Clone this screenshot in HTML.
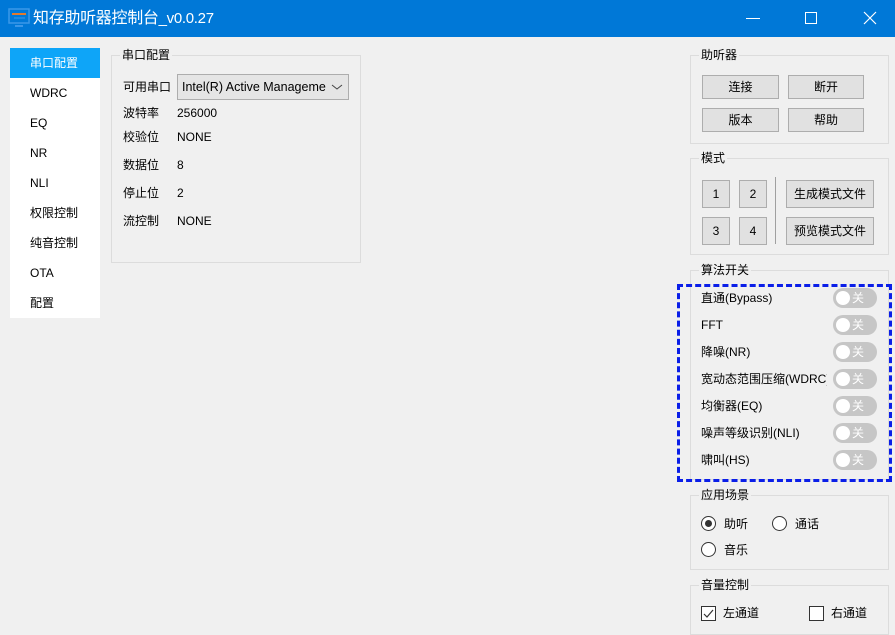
<!DOCTYPE html>
<html><head><meta charset="utf-8"><style>
*{box-sizing:border-box;margin:0;padding:0}
body{width:895px;height:627px;overflow:hidden;background:#f0f0f0;font-family:"Liberation Sans","Noto Sans CJK SC",sans-serif;font-size:12px;line-height:16px;color:#000;position:relative}
.a{position:absolute;line-height:16px}
.title{left:0;top:0;width:895px;height:37px;background:#0078d7;color:#fff}
.grp{position:absolute;border:1px solid #dcdcdc}
.grp>.t{position:absolute;top:-9px;left:8px;background:#f0f0f0;padding:0 2px;font-size:12px;line-height:16px}
.btn{position:absolute;background:#e1e1e1;border:1px solid #adadad;text-align:center;font-size:12px}
.nav div{height:30px;line-height:30px;padding-left:20px}
.tg{position:absolute;left:833px;width:44px;height:20px;border-radius:10px;background:#c6c6c6}
.tg::before{content:"";position:absolute;left:3px;top:3px;width:14px;height:14px;border-radius:7px;background:#fff}
.tg span{position:absolute;left:19px;top:2px;color:#fff;font-size:12px;line-height:16px}
.lbl{position:absolute;left:701px;line-height:16px}
.rad{position:absolute;width:15px;height:15px;border:1px solid #333;border-radius:50%;background:#fff}
</style></head><body>
<div class="a title">
 <svg class="a" style="left:8px;top:8px" width="22" height="20"><rect x="1" y="1" width="20" height="14" fill="none" stroke="#3b97e8" stroke-width="1.5"/><rect x="4" y="5" width="14" height="2" fill="#e07a2e"/><line x1="6" y1="10" x2="17" y2="10" stroke="#3b97e8"/><rect x="7" y="17" width="8" height="2" fill="#3b97e8"/></svg>
 <div class="a" style="left:33px;top:8px;font-size:16px;line-height:22px;letter-spacing:-0.3px">知存助听器控制台<span style="font-size:15px">_v0.0.27</span></div>
 <div class="a" style="left:746px;top:18px;width:14px;height:1px;background:#fff"></div>
 <div class="a" style="left:805px;top:12px;width:12px;height:12px;border:1px solid #fff"></div>
 <svg class="a" style="left:863px;top:11px" width="14" height="14"><path d="M1 1L13 13M13 1L1 13" stroke="#fff" stroke-width="1.2"/></svg>
</div>
<div class="a nav" style="left:10px;top:48px;width:90px;height:270px;background:#fff">
 <div style="background:#0ea5f8;color:#fff">串口配置</div><div>WDRC</div><div>EQ</div><div>NR</div><div>NLI</div><div>权限控制</div><div>纯音控制</div><div>OTA</div><div>配置</div>
</div>
<div class="grp" style="left:111px;top:55px;width:250px;height:208px"><div class="t">串口配置</div></div>
<div class="a" style="left:123px;top:79px">可用串口</div>
<div class="a" style="left:177px;top:74px;width:172px;height:26px;background:#e5e5e5;border:1px solid #adadad;line-height:24px;padding-left:4px;overflow:hidden;white-space:nowrap;font-size:12.5px">Intel(R) Active Manageme<span class="a" style="right:0;top:0;width:22px;height:24px;background:#e5e5e5"><svg width="22" height="24"><path d="M6 10L11 14L16 10" stroke="#444" fill="none"/></svg></span></div>
<div class="a" style="left:123px;top:105px">波特率</div><div class="a" style="left:177px;top:105px">256000</div>
<div class="a" style="left:123px;top:129px">校验位</div><div class="a" style="left:177px;top:129px">NONE</div>
<div class="a" style="left:123px;top:157px">数据位</div><div class="a" style="left:177px;top:157px">8</div>
<div class="a" style="left:123px;top:185px">停止位</div><div class="a" style="left:177px;top:185px">2</div>
<div class="a" style="left:123px;top:213px">流控制</div><div class="a" style="left:177px;top:213px">NONE</div>

<div class="grp" style="left:690px;top:55px;width:199px;height:89px"><div class="t">助听器</div></div>
<div class="btn" style="left:702px;top:75px;width:77px;height:24px;line-height:22px">连接</div>
<div class="btn" style="left:788px;top:75px;width:76px;height:24px;line-height:22px">断开</div>
<div class="btn" style="left:702px;top:108px;width:77px;height:24px;line-height:22px">版本</div>
<div class="btn" style="left:788px;top:108px;width:76px;height:24px;line-height:22px">帮助</div>

<div class="grp" style="left:690px;top:158px;width:199px;height:97px"><div class="t">模式</div></div>
<div class="btn" style="left:702px;top:180px;width:28px;height:28px;line-height:26px">1</div>
<div class="btn" style="left:739px;top:180px;width:28px;height:28px;line-height:26px">2</div>
<div class="btn" style="left:702px;top:217px;width:28px;height:28px;line-height:26px">3</div>
<div class="btn" style="left:739px;top:217px;width:28px;height:28px;line-height:26px">4</div>
<div class="a" style="left:775px;top:177px;width:1px;height:67px;background:#a0a0a0"></div>
<div class="btn" style="left:786px;top:180px;width:88px;height:28px;line-height:26px">生成模式文件</div>
<div class="btn" style="left:786px;top:217px;width:88px;height:28px;line-height:26px">预览模式文件</div>

<div class="grp" style="left:690px;top:270px;width:199px;height:210px"><div class="t">算法开关</div></div>
<div class="a" style="left:677px;top:284px;width:215px;height:198px;border:3px dashed #0a1ee8"></div>
<div class="lbl" style="top:290px">直通(Bypass)</div><div class="tg" style="top:288px"><span>关</span></div>
<div class="lbl" style="top:317px">FFT</div><div class="tg" style="top:315px"><span>关</span></div>
<div class="lbl" style="top:344px">降噪(NR)</div><div class="tg" style="top:342px"><span>关</span></div>
<div class="lbl" style="top:371px;width:126px;overflow:hidden;white-space:nowrap">宽动态范围压缩(WDRC)</div><div class="tg" style="top:369px"><span>关</span></div>
<div class="lbl" style="top:398px">均衡器(EQ)</div><div class="tg" style="top:396px"><span>关</span></div>
<div class="lbl" style="top:425px">噪声等级识别(NLI)</div><div class="tg" style="top:423px"><span>关</span></div>
<div class="lbl" style="top:452px">啸叫(HS)</div><div class="tg" style="top:450px"><span>关</span></div>

<div class="grp" style="left:690px;top:495px;width:199px;height:75px"><div class="t">应用场景</div></div>
<div class="rad" style="left:701px;top:516px"><div class="a" style="left:3px;top:3px;width:7px;height:7px;border-radius:50%;background:#333"></div></div>
<div class="a" style="left:724px;top:516px">助听</div>
<div class="rad" style="left:772px;top:516px"></div><div class="a" style="left:795px;top:516px">通话</div>
<div class="rad" style="left:701px;top:542px"></div><div class="a" style="left:724px;top:542px">音乐</div>

<div class="grp" style="left:690px;top:585px;width:199px;height:50px"><div class="t">音量控制</div></div>
<div class="a" style="left:701px;top:606px;width:15px;height:15px;border:1px solid #333;background:#fff"><svg width="13" height="13" class="a" style="left:0;top:0"><path d="M2 7L5 10L11 3" stroke="#333" fill="none" stroke-width="1.2"/></svg></div>
<div class="a" style="left:723px;top:605px">左通道</div>
<div class="a" style="left:809px;top:606px;width:15px;height:15px;border:1px solid #333;background:#fff"></div>
<div class="a" style="left:831px;top:605px">右通道</div>
</body></html>
